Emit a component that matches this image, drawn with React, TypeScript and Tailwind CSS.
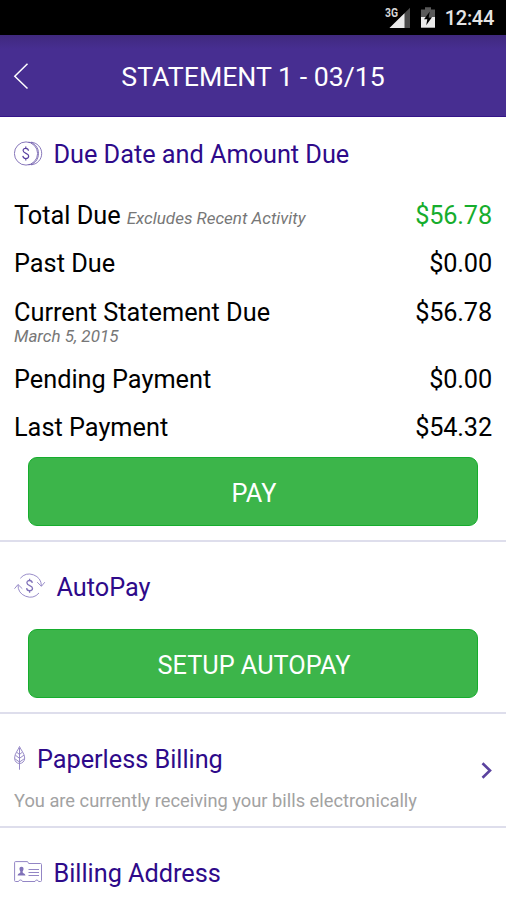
import React from 'react';

interface StatementRow {
  label: string;
  amount: string;
  note?: string;
  date?: string;
  highlight?: boolean;
}

const rows: StatementRow[] = [
  { label: 'Total Due', note: 'Excludes Recent Activity', amount: '$56.78', highlight: true },
  { label: 'Past Due', amount: '$0.00' },
  { label: 'Current Statement Due', date: 'March 5, 2015', amount: '$56.78' },
  { label: 'Pending Payment', amount: '$0.00' },
  { label: 'Last Payment', amount: '$54.32' }
];

const DollarSign: React.FC = () => (
  <path d="M5.800 4.100C5.600 2.500 4.600 1.700 3 1.700C1.400 1.700 .4 2.600 .4 4C.4 7.300 6 6.200 6 9.400C6 11 4.800 11.900 3.100 11.900C1.400 11.900 .3 11 .1 9.300M3.100 0V1.700M3.100 11.900V13.900" />
);

const CoinsIcon: React.FC = () => (
  <svg className="-mt-[3px]" width="29" height="25" viewBox="0 0 29 25" fill="none" stroke="#6a55a8" strokeWidth="0.8">
    <circle cx="12" cy="12.500" r="11.600" />
    <path d="M14.500 1.200C20.500 1.400 24.500 6.500 24.500 12.500S20.500 23.600 14.500 23.800M17 1.200C23.200 1.600 27.700 6.500 27.700 12.500S23.200 23.400 17 23.800" />
    <g transform="translate(8.700 5.600)" strokeWidth="1.200" stroke="#5940a0">
      <DollarSign />
    </g>
  </svg>
);

const AutoPayIcon: React.FC = () => (
  <svg className="-mt-[4px]" width="32" height="26" viewBox="0 0 32 26" fill="none" stroke="#9387c6" strokeWidth="0.950">
    <path d="M6.300 5.300A12 12 0 0 1 27.400 13M23.200 9.200L27.400 13.300L30.800 9.200" />
    <path d="M25 20A12 12 0 0 1 4 11.800M.5 15.700L4 11.500L8.300 15.700" />
    <g transform="translate(12.500 5.800)" strokeWidth="1.300" stroke="#8072b9">
      <DollarSign />
    </g>
  </svg>
);

const LeafIcon: React.FC = () => (
  <svg className="-mt-[5px]" width="13" height="24" viewBox="0 0 13 24" fill="none" stroke="#9184c4" strokeWidth="0.950">
    <path d="M5.500 .5C4.500 3.500 .6 7.600 .6 12C.6 15.500 3 17.500 5.500 17.500S10.700 15.500 10.700 12C10.700 7.600 6.500 3.500 5.500 .5Z" />
    <path d="M5.500 2V23.700M5.500 8.500L2.700 6.200M5.500 8.500L8.300 6.200M5.500 12.300L1.400 9.200M5.500 12.300L9.900 9.200M5.500 16L1.200 13M5.500 16L9.900 13" />
  </svg>
);

const AddressCardIcon: React.FC = () => (
  <svg className="-mt-[5px]" width="29" height="22" viewBox="0 0 29 22" fill="none" stroke="#9386c5" strokeWidth="1">
    <path d="M.6 1.500Q.6 .6 1.500 .6H13Q14 .6 14.200 1.500L14.700 2.500H26.500Q27.500 2.500 27.500 3.500V19.500Q27.500 20.500 26.500 20.500H24.500Q24 19 22.800 19T21 20.500H8.500Q8 19 6.500 19T4.500 20.500H1.500Q.6 20.500 .6 19.500Z" />
    <path d="M14.500 8.500H25M14.500 11.500H25M14.500 14.500H25" />
    <path d="M7.500 5.800C9.200 5.800 9.700 6.800 9.500 8.200C9.400 9.400 8.700 10 8.600 10.900C8.600 12.400 11.300 12.200 11.500 14.600H3.600C3.700 12.200 6.400 12.400 6.400 10.900C6.300 10 5.600 9.400 5.500 8.200C5.300 6.800 5.800 5.800 7.500 5.800Z" fill="#8072b9" stroke="none" />
  </svg>
);

const StatusBar: React.FC = () => (
  <div className="flex h-[35px] shrink-0 items-start justify-end bg-black pr-[12px] text-[#e4e4e4]">
    <svg className="mt-[3px]" width="28" height="26" viewBox="-2 -4 28 26">
      <path d="M25 .8V21H4.500Z" fill="#4b4b4b" />
      <path d="M19.500 6.200V21H4.500Z" fill="#ebebeb" />
      <text x="0" y="10.300" fontSize="12.500" fontWeight="700" textLength="13" lengthAdjust="spacingAndGlyphs" fill="#d5d5d5" stroke="#000" strokeWidth="1.500" paintOrder="stroke">3G</text>
    </svg>
    <svg className="mt-[7px] ml-[10px]" width="14" height="22" viewBox="0 0 14 22">
      <path d="M0 2.500H4V.3H10V2.500H14V10H0Z" fill="#595959" />
      <path d="M0 10H14V20.700H0Z" fill="#ebebeb" />
      <path d="M8.800 4.500L3 12.300H6.300L5.200 18.300L11 10.300H7.700Z" fill="#000" />
    </svg>
    <span className="ml-[10px] mt-[4px] text-[20px] font-medium leading-[29px] tracking-[-0.3px]">12:44</span>
  </div>
);

const SectionTitle: React.FC<{ icon: React.ReactNode; title: string; className?: string }> = ({ icon, title, className = '' }) => (
  <div className={`flex h-[30px] items-center gap-[10px] text-[25.3px] text-[#2e0a8a] ${className}`}>
    {icon}
    <h2 className="pl-[0.5px] tracking-[-0.03px]">{title}</h2>
  </div>
);

const GreenButton: React.FC<{ children: React.ReactNode; className: string }> = ({ children, className }) => (
  <button className={`mx-[14px] block h-[69px] shrink-0 rounded-[9px] border border-[#16ad2d] bg-[#3cb54a] pl-[2px] text-[25.3px] text-white ${className}`}>
    {children}
  </button>
);

const App: React.FC = () => {
  return (
    <div className="flex h-[900px] w-[506px] flex-col overflow-hidden bg-white font-['Roboto',sans-serif] text-black">
      <StatusBar />

      <header className="relative flex h-[82px] shrink-0 items-center justify-center border-b border-[#35158a] bg-[linear-gradient(#40297e,#472e91_14px)] pt-[4px]">
        <button className="absolute left-[13px] top-[28px]" aria-label="Back">
          <svg width="16" height="27" viewBox="0 0 16 27" fill="none" stroke="#fff" strokeWidth="1.500">
            <path d="M14.500 .8L1.800 13.300L14.500 25.500" />
          </svg>
        </button>
        <h1 className="text-[26.7px] text-white">STATEMENT 1 - 03/15</h1>
      </header>

      <section className="flex h-[425px] shrink-0 flex-col border-b-2 border-[#dedeec] px-[14px] pt-[23px]">
        <SectionTitle icon={<CoinsIcon />} title="Due Date and Amount Due" />
        <div className="mt-[22px]">
          {rows.map(row => (
            <div key={row.label} className="flex justify-between text-[25.3px] leading-[48.3px]">
              <div>
                <span>{row.label}</span>
                {row.note && <em className="ml-[6px] text-[17px] leading-none text-[#777]">{row.note}</em>}
                {row.date && <em className="-mt-[11px] block h-[30px] text-[17px] leading-[20px] text-[#777]">{row.date}</em>}
              </div>
              <span className={row.highlight ? 'tracking-[-0.15px] text-[#16ad2d]' : 'tracking-[-0.15px]'}>{row.amount}</span>
            </div>
          ))}
        </div>
        <GreenButton className="mt-[5px] pt-[4px]">PAY</GreenButton>
      </section>

      <section className="flex h-[172px] shrink-0 flex-col border-b-2 border-[#dedeec] px-[14px] pt-[31px]">
        <SectionTitle icon={<AutoPayIcon />} title="AutoPay" />
        <GreenButton className="mt-[26px] pt-[5px]">SETUP AUTOPAY</GreenButton>
      </section>

      <section className="flex h-[114px] shrink-0 items-center justify-between border-b-2 border-[#dedeec] px-[14px]">
        <div className="self-start pt-[31px]">
          <SectionTitle className="-ml-[0.5px]" icon={<LeafIcon />} title="Paperless Billing" />
          <p className="mt-[14px] text-[18.270px] leading-[24px] text-[#a2a2a2]">You are currently receiving your bills electronically</p>
        </div>
        <svg className="-mr-px" width="12" height="17" viewBox="0 0 12 17" fill="none" stroke="#5b439f" strokeWidth="2.600">
          <path d="M1.500 1.300L9 8.500L1.500 15.700" />
        </svg>
      </section>

      <section className="shrink-0 px-[14px] pt-[31px]">
        <SectionTitle icon={<AddressCardIcon />} title="Billing Address" />
      </section>
    </div>
  );
};

export default App;
